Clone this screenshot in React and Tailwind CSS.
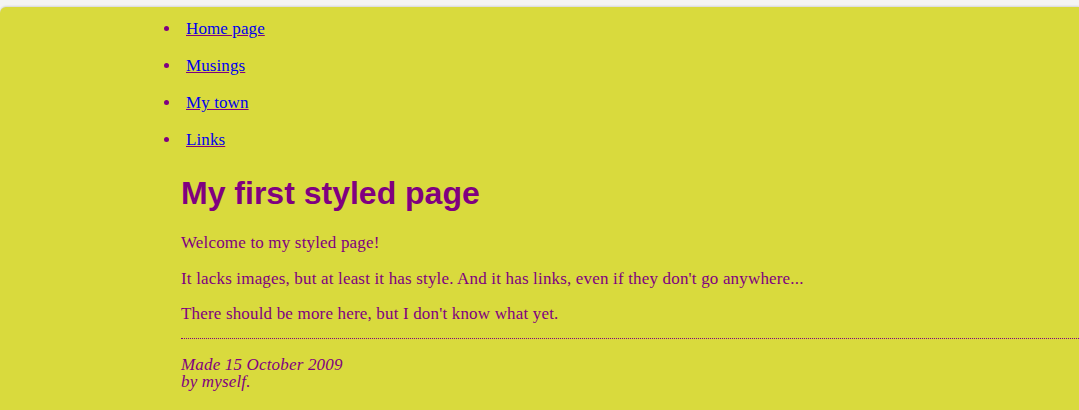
const links = ['Home page', 'Musings', 'My town', 'Links']

export default function App() {
  return (
    <div className="min-h-[410px] bg-[#f4f4f4] pt-[7px]" style={{ fontFamily: '"Liberation Serif", "Times New Roman", serif' }}>
      <div className="min-h-[403px] bg-[#d9da3d] rounded-tl-[6px] shadow-[0_-1px_2px_rgba(0,0,0,0.12)] text-[#800080]">
        {/* Navigation */}
        <ul className="pt-[12px] flex flex-col gap-[18px]">
          {links.map((label) => (
            <li key={label} className="flex items-center h-[19px]">
              <span className="w-[5px] h-[5px] rounded-full bg-[#800080] ml-[164px] mr-[17px]" />
              <a href="#" className="text-[#0000ee] underline decoration-[#800080] text-[17px] tracking-[0.1px]">{label}</a>
            </li>
          ))}
        </ul>

        {/* Main */}
        <div className="pl-[181px] tracking-[0.17px]">
          <h1 className="mt-[26px] text-[32px] font-bold leading-[37px] tracking-normal" style={{ fontFamily: '"Liberation Sans", Arial, sans-serif' }}>
            My first styled page
          </h1>
          <p className="mt-[21px] text-[17px] leading-[19px]">Welcome to my styled page!</p>
          <p className="mt-[17px] text-[17px] leading-[19px]">
            It lacks images, but at least it has style. And it has links, even if they don't go anywhere...
          </p>
          <p className="mt-[16px] text-[17px] leading-[19px]">There should be more here, but I don't know what yet.</p>
          <hr className="mt-[15px] border-0 border-t border-dotted border-[#800080]" />
          <address className="mt-[17px] text-[17px] leading-[17px] italic">
            Made 15 October 2009
            <br />
            by myself.
          </address>
        </div>
      </div>
    </div>
  )
}
